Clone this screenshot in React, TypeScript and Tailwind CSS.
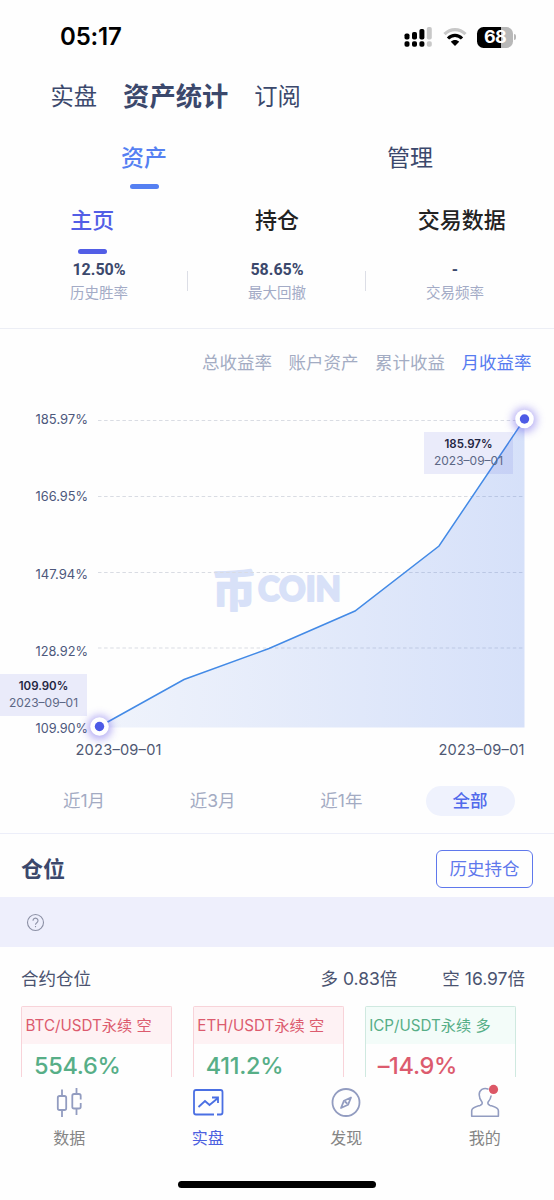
import type { ReactNode } from "react";
import clsx from "clsx";

const stats = [
  { value: "12.50%", label: "历史胜率" },
  { value: "58.65%", label: "最大回撤" },
  { value: "-", label: "交易频率" },
];

const metrics = ["总收益率", "账户资产", "累计收益", "月收益率"];
const ranges = ["近1月", "近3月", "近1年", "全部"];

const gridLines = [
  { label: "185.97%", y: 42.5, text: 41 },
  { label: "166.95%", y: 118.5, text: 118 },
  { label: "147.94%", y: 194.5, text: 195.5 },
  { label: "128.92%", y: 270, text: 272.5 },
];

const points = "99.5,348.5 184,301.5 269,270.5 355,233 439,168 524.5,41";

const positions = [
  { pair: "BTC/USDT永续 空", value: "554.6%", short: true },
  { pair: "ETH/USDT永续 空", value: "411.2%", short: true },
  { pair: "ICP/USDT永续 多", value: "–14.9%", short: false },
];

function StatusBar() {
  return (
    <div className="flex h-[74px] items-center justify-between pr-[38px] pl-[60px]">
      <span className="text-[24px] leading-none font-semibold tracking-[-0.2px] text-black">05:17</span>
      <div className="flex items-center">
        <svg width="28" height="22" viewBox="0 0 28 22">
          <g fill="#000">
            <rect x="0.500" y="7.5" width="5" height="6" rx="1.8" />
            <rect x="8" y="6" width="5" height="7.5" rx="1.8" />
            <rect x="15.4" y="3" width="5" height="10.5" rx="1.8" />
            <rect x="0.500" y="15.3" width="5" height="5.4" rx="1.8" />
            <rect x="8" y="15.3" width="5" height="5.4" rx="1.8" />
            <rect x="15.4" y="15.3" width="5" height="5.4" rx="1.8" />
          </g>
          <g fill="#c8c8c8">
            <rect x="22.8" y="1" width="5" height="12.5" rx="1.8" />
            <rect x="22.8" y="15.3" width="5" height="5.4" rx="1.8" />
          </g>
        </svg>
        <svg className="ml-[11px]" width="24" height="20" viewBox="0 0 24 20" fill="none">
          <path d="M1.500 7.200C7.500 1 16.500 1 22.500 7.200" stroke="#c8c8c8" strokeWidth="3.200" />
          <path d="M5 11.500C9 7.300 15 7.300 19 11.500" stroke="#000" strokeWidth="3.200" />
          <path d="M7.800 14.800C10.300 12.500 13.700 12.500 16.200 14.800L12 19Z" fill="#000" />
        </svg>
        <div className="ml-[10px] flex h-[21px] w-[36px] items-center justify-center rounded-[6.500px] bg-linear-to-r from-black from-68% to-[#b8b8b8] to-68%">
          <span className="text-[18px] leading-none font-bold tracking-[-0.6px] text-white">68</span>
        </div>
        <div className="ml-px h-[6px] w-[2px] rounded-r-full bg-[#b8b8b8]" />
      </div>
    </div>
  );
}

function Callout({ value, className }: { value: string; className: string }) {
  return (
    <div className={clsx("absolute flex h-[41.500px] flex-col items-center justify-center bg-[#5b62e0]/12", className)}>
      <span className="text-[11.500px] leading-[17px] font-semibold text-[#1f2542]">{value}</span>
      <span className="text-[12px] leading-[16px] text-[#5c6785]">2023–09–01</span>
    </div>
  );
}

function Marker({ x, y }: { x: number; y: number }) {
  return (
    <g>
      <circle cx={x} cy={y + 1} r="12" fill="#6a5be8" opacity="0.5" filter="url(#glow)" />
      <circle cx={x} cy={y} r="9.300" fill="#fff" />
      <circle cx={x} cy={y} r="4.700" fill="#4d5be6" />
    </g>
  );
}

function Chart() {
  return (
    <div className="relative h-[390px]">
      <svg width="554" height="390" viewBox="0 0 554 390" className="block">
        <defs>
          <linearGradient id="area" x1="0" x2="1" y1="0" y2="0">
            <stop offset="0" stopColor="#4a78e0" stopOpacity="0.08" />
            <stop offset="1" stopColor="#3f72e8" stopOpacity="0.21" />
          </linearGradient>
          <filter id="glow" x="-80%" y="-80%" width="260%" height="260%">
            <feGaussianBlur stdDeviation="4" />
          </filter>
        </defs>

        <g fill="#d8e1f8" stroke="#d8e1f8" strokeLinejoin="round">
          <text
            x="212"
            y="228.500"
            fontSize="44"
            fontWeight="700"
            strokeWidth="2"
            className="font-['Noto_Sans_CJK_SC',sans-serif]"
          >
            币
          </text>
          <text
            x="258"
            y="223"
            fontSize="34"
            fontWeight="900"
            strokeWidth="2"
            textLength="83"
            lengthAdjust="spacingAndGlyphs"
            className="font-['Lato',sans-serif]"
          >
            COIN
          </text>
        </g>

        {gridLines.map((g) => (
          <g key={g.label}>
            <line x1="98" x2="524" y1={g.y} y2={g.y} stroke="#d9dce3" strokeDasharray="3.500 2.600" />
            <text
              x="35.500"
              y={g.text + 5}
              textLength="52.500"
              lengthAdjust="spacingAndGlyphs"
              fontSize="13.300"
              fill="#4d587c"
            >
              {g.label}
            </text>
          </g>
        ))}
        <text x="35.500" y="355" textLength="52.500" lengthAdjust="spacingAndGlyphs" fontSize="13.300" fill="#4d587c">
          109.90%
        </text>

        <polygon points={`99.5,349.5 ${points} 524.5,349.5`} fill="url(#area)" />
        <polyline points={points} fill="none" stroke="#438ae6" strokeWidth="1.500" />
        <Marker x={99.5} y={348.5} />
        <Marker x={524.5} y={41} />

        <g fontSize="14.600" fill="#4f5873">
          <text x="75.500" y="377" textLength="86">
            2023–09–01
          </text>
          <text x="438.500" y="377" textLength="86">
            2023–09–01
          </text>
        </g>
      </svg>
      <Callout value="185.97%" className="top-[54px] left-[424px] w-[89px]" />
      <Callout value="109.90%" className="top-[296px] left-0 w-[87px]" />
    </div>
  );
}

function NavItem({ label, active, children }: { label: string; active?: boolean; children: ReactNode }) {
  return (
    <div className="flex flex-col items-center">
      <svg width="36" height="36" viewBox="0 0 36 36" fill="none" stroke={active ? "#4a6fe3" : "#929cc0"} strokeWidth="1.800">
        {children}
      </svg>
      <span className={clsx("mt-[9px] text-[16px] leading-[18px]", active ? "text-[#4c60e0]" : "text-[#858585]")}>
        {label}
      </span>
    </div>
  );
}

export default function App() {
  return (
    <div className="h-[1200px] w-[554px] overflow-hidden bg-[#fefefe] font-['Inter','Noto_Sans_CJK_SC',sans-serif] text-[#3b486c]">
      <StatusBar />

      <div className="flex h-11 items-center gap-[26px] pt-[2px] pl-[50.500px] leading-none">
        <span className="text-[23.300px]">实盘</span>
        <span className="text-[26.300px] font-bold">资产统计</span>
        <span className="text-[23.300px]">订阅</span>
      </div>

      <div className="mx-[11px] grid h-[70px] grid-cols-2 text-[23px] leading-none">
        <div className="flex flex-col items-center pt-[29px]">
          <span className="font-medium text-[#5580f2]">资产</span>
          <div className="mt-[14px] h-[4.500px] w-[29px] rounded-full bg-[#5580f2]" />
        </div>
        <div className="flex flex-col items-center pt-[29px]">管理</div>
      </div>

      <div className="grid h-[66px] grid-cols-3 text-[22px] leading-none font-medium text-[#222]">
        <div className="flex flex-col items-center pt-[21px]">
          <span className="text-[#525ee6]">主页</span>
          <div className="mt-[18px] h-[4.500px] w-[29px] rounded-full bg-[#525ee6]" />
        </div>
        <div className="flex flex-col items-center pt-[21px]">持仓</div>
        <div className="flex flex-col items-center pt-[21px]">交易数据</div>
      </div>

      <div className="grid h-[75px] grid-cols-3 border-b border-[#eceef5] px-[10px] pt-[6px]">
        {stats.map((s, i) => (
          <div key={s.label} className="relative flex flex-col items-center">
            <span className="mt-px font-['Roboto',sans-serif] text-[16px] leading-[18px] font-bold">
              {s.value}
            </span>
            <span className="mt-[5px] text-[14.500px] leading-[18px] text-[#a3abc6]">{s.label}</span>
            {i < 2 && <div className="absolute top-[11px] right-0 h-5 w-px bg-[#dcdee6]" />}
          </div>
        ))}
      </div>

      <div className="flex h-[49px] items-end justify-end gap-[16.500px] pr-[22.500px] pb-[6px] text-[17.500px] leading-[18px] text-[#a3acc3]">
        {metrics.map((m) => (
          <span key={m} className={clsx(m === "月收益率" && "text-[#567bf0]")}>
            {m}
          </span>
        ))}
      </div>

      <Chart />

      <div className="flex h-[66px] items-center justify-center border-b border-[#eceef9] text-[17.500px] leading-none text-[#a3abc3]">
        {ranges.map((r) => (
          <div key={r} className="flex w-[128.700px] justify-center">
            {r === "全部" ? (
              <span className="flex h-[30px] w-[89px] items-center justify-center rounded-full bg-[#eff2fd] font-medium text-[#5069eb]">
                {r}
              </span>
            ) : (
              <span>{r}</span>
            )}
          </div>
        ))}
      </div>

      <div className="flex h-[63px] items-center justify-between pt-[7px] pr-[21px] pb-px pl-[21px]">
        <h2 className="text-[22px] leading-none font-bold">仓位</h2>
        <button className="h-[38px] w-[97px] rounded-[6px] border-[1.500px] border-[#5f78ec] pt-px text-[17.500px] leading-none text-[#5f78ec]">
          历史持仓
        </button>
      </div>

      <div className="flex h-[50px] items-center bg-[#eeeffc] pl-[26px]">
        <svg width="19" height="19" viewBox="0 0 19 19" fill="none" stroke="#8c90a5" strokeWidth="1.100">
          <circle cx="9.500" cy="9.500" r="8" />
          <path d="M7 7.700a2.500 2.500 0 1 1 3.800 2.100c-.9.600-1.300 1-1.300 2" />
          <path d="M9.500 13v1.200" />
        </svg>
      </div>

      <div className="flex h-[59px] items-center pt-[4px] pr-[29px] pl-[21px] text-[17.500px] leading-none text-[#4a5370]">
        <span className="flex-1">合约仓位</span>
        <span>多 0.83倍</span>
        <span className="ml-[45px]">空 16.97倍</span>
      </div>

      <div className="grid h-[71px] grid-cols-3 gap-[20.500px] overflow-hidden pr-[38px] pl-[21px]">
        {positions.map((p) => (
          <div
            key={p.pair}
            className={clsx("h-[71px] rounded-t-[2px] border border-b-0", p.short ? "border-[#f8d3d9]" : "border-[#cfe9e0]")}
          >
            <div
              className={clsx(
                "flex h-[37px] items-center pl-[3.500px] text-[15.200px] leading-none whitespace-nowrap",
                p.short ? "bg-[#fef2f4] text-[#dc5b6e]" : "bg-[#f3fcf9] text-[#57ae87]",
              )}
            >
              {p.pair}
            </div>
            <div
              className={clsx(
                "pt-[10px] pl-[12px] text-[23.500px] leading-none font-medium tracking-[-0.300px]",
                p.short ? "text-[#57ae87]" : "text-[#dc5b6e]",
              )}
            >
              {p.value}
            </div>
          </div>
        ))}
      </div>

      <nav className="grid h-[104px] grid-cols-4 pt-[7px]">
        <NavItem label="数据">
          <rect x="6.800" y="12" width="8.400" height="14" rx="1.800" />
          <path d="M11 5.500v6.500M11 26v7" />
          <path d="M29.700 15.500v-3.700q0-1.800-1.800-1.800h-4.800q-1.800 0-1.800 1.800v10.900q0 1.800 1.800 1.800h4.800q1.800 0 1.800-1.800v-3.700M25.500 4v6M25.500 24.500v6.500" />
        </NavItem>
        <NavItem label="实盘" active>
          <path d="M24 30.500H6q-2 0-2-2V8q0-2 2-2h24.500q2 0 2 2v20.500q0 2-2 2H27" />
          <path d="m8.500 23 6.500-6 4.500 4 8.500-7M22 13.500h6v5.500" />
        </NavItem>
        <NavItem label="发现">
          <circle cx="18" cy="18.500" r="13.500" />
          <path d="m23 13.500-7 3.200-3 7.300 7-3.200zM17 17.500l2.200 2.200" strokeLinejoin="round" />
        </NavItem>
        <NavItem label="我的">
          <path
            d="M21.500 5.200C16.500 3 12 6.200 12.200 10.700c.1 3.300 1.300 5.500 2.600 7 1 1.800.3 3-1.800 3.700-4 1.200-8.300 2-8.300 5.400v5.500h26.700v-5.500c0-3.400-4.300-4.200-8.300-5.400-2.100-.7-2.800-1.900-1.800-3.700 1.300-1.500 2.500-3.600 2.900-6.200"
            strokeLinejoin="round"
            strokeWidth="1.600"
          />
          <circle cx="26.500" cy="5.400" r="4.600" fill="#dc5766" stroke="none" />
        </NavItem>
      </nav>

      <div className="mx-auto h-[7px] w-[198px] rounded-full bg-black" />
    </div>
  );
}
